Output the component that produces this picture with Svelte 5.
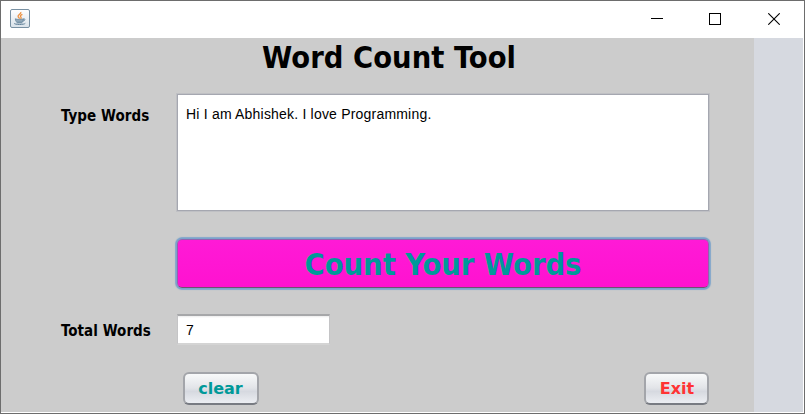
<script>
  let words = $state('Hi I am Abhishek. I love Programming.');
  let total = $state('7');

  function count() {
    total = String(words.split(/\s+/).filter(Boolean).length);
  }

  function clear() {
    words = '';
    total = '';
  }
</script>

<div class="window">
  <header>
    <svg class="java" width="20" height="19" viewBox="0 0 20 19">
      <defs>
        <linearGradient id="tile" x1="0" y1="0" x2="0" y2="1">
          <stop offset="0" stop-color="#ffffff" />
          <stop offset="1" stop-color="#d9e2e9" />
        </linearGradient>
      </defs>
      <rect x="0.5" y="0.5" width="19" height="18" rx="1.5" fill="url(#tile)" stroke="#7890a2" />
      <path d="M10.8 3c1 1.800-3.300 2.700-2.700 4.600.2.800 1.400 1.300 1.600 2M12.400 5.300c-2.200 1-2.500 1.900-1.400 3 .4.500.2 1-.2 1.500" fill="none" stroke="#ee9140" stroke-width="1.300" />
      <path d="M5.300 9.800c1.700.9 6.500.9 8.200 0-.1 2-.7 3.100-1.800 3.400H7.500C6.200 13 5.500 12 5.300 9.800Z" fill="#93a9b9" stroke="#66859c" stroke-width=".8" />
      <path d="M13.600 10c2-.4 1.900 1.800-1.100 2.200M4 14.200c1 1.800 9.900 1.700 11.300.1M6.500 13.900h6" fill="none" stroke="#66859c" stroke-width="1" />
    </svg>
    <div class="controls">
      <svg width="12" height="12" viewBox="0 0 12 12" shape-rendering="crispEdges"><path d="M0 5.500h12" stroke="#000" /></svg>
      <svg width="12" height="12" viewBox="0 0 12 12" shape-rendering="crispEdges"><path d="M.5.5h11v11H.5Z" fill="none" stroke="#000" /></svg>
      <svg width="12" height="12" viewBox="0 0 12 12"><path d="M.3.3l11.400 11.400M11.700.3L.3 11.700" fill="none" stroke="#000" stroke-width="1.100" /></svg>
    </div>
  </header>

  <main>
    <section class="panel">
      <h1>Word Count Tool</h1>
      <div class="row type">
        <label for="words">Type Words</label>
        <textarea id="words" spellcheck="false" bind:value={words}></textarea>
      </div>
      <button class="count" onclick={count}>Count Your Words</button>
      <div class="row total">
        <label for="total">Total Words</label>
        <input id="total" readonly value={total} />
      </div>
      <div class="actions">
        <button class="small clear" onclick={clear}>clear</button>
        <button class="small exit">Exit</button>
      </div>
    </section>
  </main>
</div>

<style>
  :global(body) {
    background: #6d6d6d;
    overflow: hidden;
  }
  .window {
    box-sizing: border-box;
    width: 805px;
    height: 414px;
    border: 1px solid #6d6d6d;
    background: #fff;
    display: flex;
    flex-direction: column;
    font-family: 'DejaVu Sans Condensed', 'DejaVu Sans', sans-serif;
    font-stretch: condensed;
  }
  header {
    height: 37px;
    flex: none;
    display: flex;
    justify-content: space-between;
    background: #fff;
  }
  .java {
    margin: 8px 0 0 9px;
  }
  .controls {
    display: flex;
    gap: 46px;
    padding: 12px 24px 0 0;
  }
  .controls svg:last-child {
    margin-left: 1px;
  }
  main {
    flex: 1;
    margin: 0 1px 1px 0;
    background: #d6d9e0;
  }
  .panel {
    width: 753px;
    height: 374px;
    background: #ccc;
    display: flex;
    flex-direction: column;
  }
  h1 {
    margin: 0 0 0 261px;
    height: 56px;
    font-size: 30.5px;
    line-height: 40px;
    font-weight: bold;
    letter-spacing: 0.05px;
    white-space: nowrap;
  }
  .row {
    display: flex;
    padding-left: 60px;
  }
  label {
    width: 116px;
    flex: none;
    font-size: 15px;
    font-weight: bold;
    line-height: 20px;
    letter-spacing: 0.05px;
    white-space: nowrap;
  }
  .type label {
    margin-top: 12px;
  }
  textarea {
    box-sizing: border-box;
    width: 532px;
    height: 117px;
    margin: 0;
    padding: 10px 8px;
    border: 1px solid #a5a7b0;
    outline: 0;
    resize: none;
    background: #fff;
    color: #000;
    font: 14px/18px 'Liberation Sans', Arial, sans-serif;
    letter-spacing: 0.2px;
    box-shadow: 0 0 0 1px #bfc0c4;
  }
  button {
    box-sizing: border-box;
    padding: 0;
    font-family: inherit;
    font-weight: bold;
    font-stretch: inherit;
    white-space: nowrap;
  }
  .count {
    width: 532px;
    height: 49px;
    margin: 28px 0 0 176px;
    padding-top: 2px;
    border: 1px solid #9460ad;
    border-bottom-color: #70506f;
    border-radius: 5px;
    background: linear-gradient(#ff1ad6, #ff12d0);
    box-shadow: 0 0 0 1.5px #7aa3cb, 0 0 1px 2px #93afca;
    color: #009999;
    font-size: 30.5px;
    line-height: 45px;
  }
  .total {
    margin-top: 26px;
  }
  .total label {
    margin-top: 7px;
  }
  input {
    box-sizing: border-box;
    width: 153px;
    height: 31px;
    margin: 0;
    padding: 1px 8px 0;
    border: 1px solid #c4c4c6;
    border-top: 2px solid #a6a7a9;
    border-bottom: 2px solid #d4d4d4;
    outline: 0;
    background: linear-gradient(#ececec, #fff 2px);
    color: #000;
    font: 14px 'Liberation Sans', Arial, sans-serif;
  }
  .actions {
    display: flex;
    justify-content: space-between;
    padding: 27px 45px 0 182px;
  }
  .small {
    height: 33px;
    padding-top: 1px;
    border: 2px solid #a3a5aa;
    border-bottom-color: #787b82;
    border-radius: 6px;
    background: linear-gradient(#f8f9fa, #e2e4e8 48%, #d6d9e0 60%, #eceef2);
    font-family: 'DejaVu Sans', sans-serif;
    font-stretch: normal;
    font-size: 16px;
    line-height: 28px;
  }
  .clear {
    width: 76px;
    padding-right: 1px;
    color: #009999;
  }
  .exit {
    width: 65px;
    padding-left: 1px;
    color: #ff3333;
  }
</style>
